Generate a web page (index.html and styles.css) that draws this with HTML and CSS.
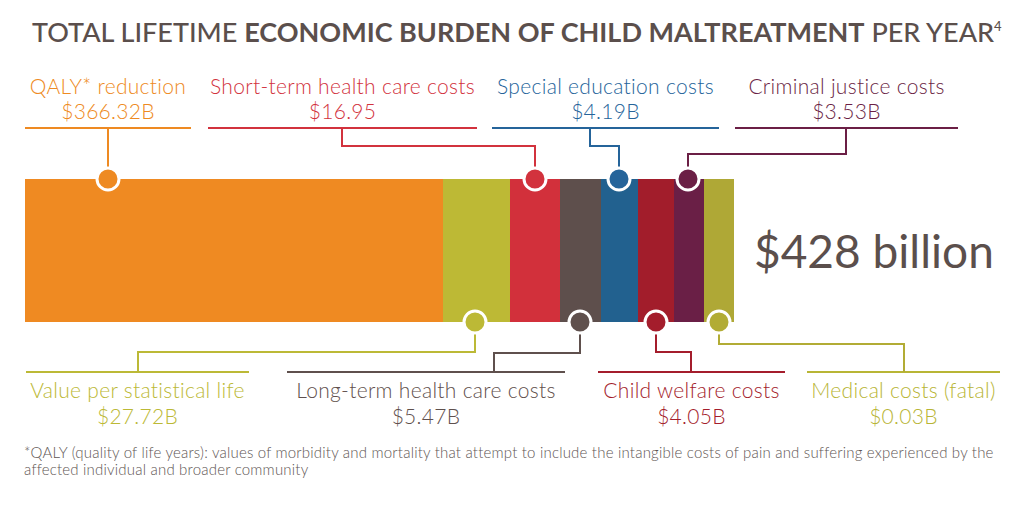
FILE: index.html
```html
<!DOCTYPE html>
<html lang="en">
<head>
<meta charset="utf-8">
<title>Total lifetime economic burden of child maltreatment</title>
<link rel="stylesheet" href="styles.css">
</head>
<body>
<div class="page">
  <h1 class="title">TOTAL LIFETIME <b>ECONOMIC BURDEN OF CHILD MALTREATMENT</b> PER YEAR<sup>4</sup></h1>

  <div class="labels labels-top">
    <div class="label qaly"><span>QALY* reduction</span><span>$366.32B</span></div>
    <div class="label short"><span>Short-term health care costs</span><span>$16.95</span></div>
    <div class="label special"><span>Special education costs</span><span>$4.19B</span></div>
    <div class="label criminal"><span>Criminal justice costs</span><span>$3.53B</span></div>
  </div>

  <div class="bar-row">
    <div class="bar">
      <div class="seg c-orange" style="width:418px"></div>
      <div class="seg c-olive" style="width:67px"></div>
      <div class="seg c-red" style="width:50px"></div>
      <div class="seg c-brown" style="width:41px"></div>
      <div class="seg c-blue" style="width:37px"></div>
      <div class="seg c-darkred" style="width:36px"></div>
      <div class="seg c-purple" style="width:30px"></div>
      <div class="seg c-olive2" style="width:30px"></div>
    </div>
    <div class="total">$428 billion</div>
  </div>

  <div class="labels labels-bottom">
    <div class="label vsl"><span>Value per statistical life</span><span>$27.72B</span></div>
    <div class="label longterm"><span>Long-term health care costs</span><span>$5.47B</span></div>
    <div class="label welfare"><span>Child welfare costs</span><span>$4.05B</span></div>
    <div class="label medical"><span>Medical costs (fatal)</span><span>$0.03B</span></div>
  </div>

  <p class="footnote">*QALY (quality of life years): values of morbidity and mortality that attempt to include the intangible costs of pain and suffering experienced by the affected individual and broader community</p>

  <svg class="connectors" width="1024" height="512" viewBox="0 0 1024 512" aria-hidden="true">
    <g fill="none" stroke-width="2">
      <path d="M108 129 V179" stroke="#EE8A22"/>
      <path d="M342 129 V146 H535 V179" stroke="#D2323D"/>
      <path d="M590 129 V146 H619 V179" stroke="#25649A"/>
      <path d="M846 129 V154 H688 V179" stroke="#6B1F45"/>
      <path d="M475 322 V352 H138 V372" stroke="#BCB936"/>
      <path d="M580 322 V353 H494 V372" stroke="#5F504D"/>
      <path d="M656 322 V352 H691 V372" stroke="#A41D2C"/>
      <path d="M719 322 V344 H904 V372" stroke="#B2AC35"/>
    </g>
    <g stroke="#fff" stroke-width="3">
      <circle cx="108" cy="179" r="11" fill="#EE8A22"/>
      <circle cx="535" cy="179" r="11" fill="#D2323D"/>
      <circle cx="619" cy="179" r="11" fill="#25649A"/>
      <circle cx="688" cy="179" r="11" fill="#6B1F45"/>
      <circle cx="475" cy="322" r="11" fill="#BCB936"/>
      <circle cx="580" cy="322" r="11" fill="#5F504D"/>
      <circle cx="656" cy="322" r="11" fill="#A41D2C"/>
      <circle cx="719" cy="322" r="11" fill="#B2AC35"/>
    </g>
  </svg>
</div>
</body>
</html>
```

FILE: styles.css
```css
html, body {
  margin: 0;
  padding: 0;
  background: #ffffff;
}

.page {
  position: relative;
  width: 1024px;
  height: 512px;
  padding-top: 16px;
  box-sizing: border-box;
  font-family: Lato, "Open Sans", "Liberation Sans", sans-serif;
  color: #5B4F4C;
  overflow: hidden;
}

.title {
  margin: 0 0 25px 0;
  padding-left: 32px;
  font-size: 27px;
  line-height: 32px;
  font-weight: 500;
  letter-spacing: 0;
  white-space: nowrap;
}

.title b {
  font-weight: 700;
}

.title sup {
  font-size: 13px;
  line-height: 0;
  vertical-align: 11px;
}

.labels {
  display: flex;
  font-size: 21px;
  line-height: 25px;
  font-weight: 300;
  letter-spacing: 0.3px;
}

.label {
  display: flex;
  flex-direction: column;
  align-items: center;
  white-space: nowrap;
  flex: none;
}

.labels-top {
  padding-left: 25px;
}

.labels-top .label {
  padding-bottom: 4px;
  border-bottom: 2px solid currentColor;
}

.labels-bottom {
  padding-left: 26px;
  margin-top: 49px;
  line-height: 26px;
}

.labels-bottom .label {
  padding-top: 4px;
  border-top: 2px solid currentColor;
}

.qaly { width: 166px; color: #EE8A22; }
.short { width: 269px; margin-left: 17px; color: #D2323D; }
.special { width: 227px; margin-left: 15px; color: #25649A; }
.criminal { width: 223px; margin-left: 16px; color: #6B1F45; }

.vsl { width: 223px; color: #BCB936; }
.longterm { width: 278px; margin-left: 38px; color: #5F504D; }
.welfare { width: 187px; margin-left: 33px; color: #A41D2C; }
.medical { width: 193px; margin-left: 22px; color: #B8B535; }

.bar-row {
  display: flex;
  align-items: center;
  padding-left: 25px;
  margin-top: 50px;
}

.bar {
  display: flex;
  height: 143px;
}

.seg {
  height: 100%;
  flex: none;
}

.c-orange { background: #EF8A22; }
.c-olive { background: #BDB935; }
.c-red { background: #D2303B; }
.c-brown { background: #5E4F4C; }
.c-blue { background: #22618F; }
.c-darkred { background: #A21D2B; }
.c-purple { background: #6A1F46; }
.c-olive2 { background: #AFA836; }

.total {
  margin-left: 20px;
  font-size: 46px;
  line-height: 50px;
  font-weight: 400;
  color: #5B4F4C;
  white-space: nowrap;
}

.footnote {
  margin: 15px 0 0 0;
  padding-left: 24px;
  width: 985px;
  font-size: 15px;
  line-height: 17px;
  font-weight: 300;
  letter-spacing: 0.2px;
  color: #5E5553;
}

.connectors {
  position: absolute;
  top: 0;
  left: 0;
  pointer-events: none;
}
```
